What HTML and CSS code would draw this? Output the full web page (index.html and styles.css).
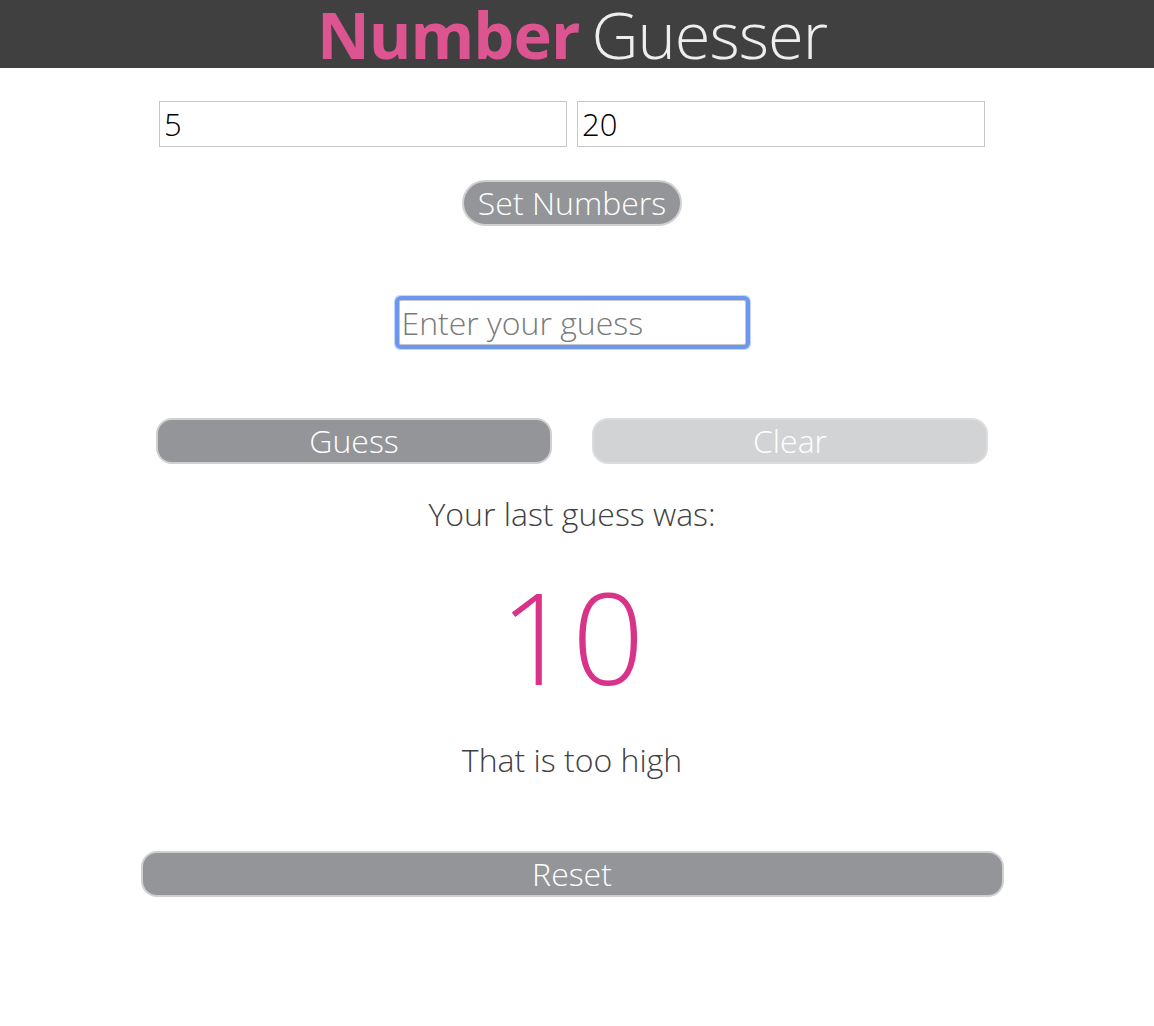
FILE: index.html
```html
<!DOCTYPE html>
<html lang="en">
<head>
<meta charset="utf-8">
<title>Number Guesser</title>
<link rel="stylesheet" href="styles.css">
</head>
<body>
<header class="top-bar">
  <h1 class="title"><span class="title-strong">Number</span><span class="title-light">Guesser</span></h1>
</header>
<main class="game">
  <div class="range-row">
    <input class="range-input" type="text" value="5">
    <input class="range-input" type="text" value="20">
  </div>
  <button class="btn btn-set">Set Numbers</button>
  <input class="guess-input" type="text" placeholder="Enter your guess">
  <div class="action-row">
    <button class="btn btn-wide">Guess</button>
    <button class="btn btn-wide btn-disabled">Clear</button>
  </div>
  <p class="last-label">Your last guess was:</p>
  <p class="last-number">10</p>
  <p class="feedback">That is too high</p>
  <button class="btn btn-reset">Reset</button>
</main>
</body>
</html>
```
FILE: styles.css
```css
* { box-sizing: border-box; }
html, body { margin: 0; padding: 0; background: #fff; }
body {
  font-family: "Open Sans", "Liberation Sans", sans-serif;
  font-weight: 300;
  color: #414042;
}
.top-bar {
  background: #404040;
  height: 68px;
  padding-right: 10px;
  display: flex;
  justify-content: center;
  align-items: flex-start;
  overflow: hidden;
}
.title {
  margin: 0;
  font-size: 65px;
  line-height: 68px;
  white-space: nowrap;
  letter-spacing: -1px;
}
.title-strong { color: #dd5590; font-weight: 700; margin-right: 12px; }
.title-light { color: #eeeeee; font-weight: 300; }
.game {
  padding-right: 10px;
  display: flex;
  flex-direction: column;
  align-items: center;
}
.range-row {
  margin-top: 33px;
  display: flex;
  gap: 10px;
}
.range-input {
  width: 408px;
  height: 46px;
  border: 1px solid #c7c7c7;
  font-family: inherit;
  font-weight: 300;
  font-size: 31px;
  color: #000;
  padding: 0 4px;
  outline: none;
}
.btn {
  font-family: inherit;
  font-weight: 300;
  color: #fff;
  background: #939598;
  border: 2px solid #d0d0d0;
  font-size: 32px;
  line-height: 1;
  padding: 0;
  cursor: pointer;
}
.btn-set {
  margin-top: 33px;
  width: 220px;
  height: 46px;
  border-radius: 23px;
}
.guess-input {
  margin-top: 74px;
  width: 347px;
  height: 45px;
  border: 1px solid #c7c7c7;
  font-family: inherit;
  font-weight: 300;
  font-size: 32px;
  padding: 0 2px;
  color: #000;
  outline: 4px solid #6b97ef;
  outline-offset: 0;
  box-shadow: 0 0 0 5px #c3d6fb;
  border-radius: 2px;
}
.guess-input::placeholder { color: #7a7a7a; }
.action-row {
  margin-top: 73px;
  display: flex;
  gap: 40px;
}
.btn-wide {
  width: 396px;
  height: 46px;
  border-radius: 16px;
}
.btn-disabled { background: #d1d3d4; border-color: #dcdcdc; }
.last-label {
  margin: 30px 0 0;
  font-size: 32px;
  line-height: 40px;
}
.last-number {
  margin: 32px 0 0;
  font-size: 127px;
  line-height: 140px;
  color: #d83289;
}
.feedback {
  margin: 34px 0 0;
  font-size: 32px;
  line-height: 40px;
}
.btn-reset {
  margin-top: 71px;
  width: 863px;
  height: 46px;
  border-radius: 16px;
}
```
